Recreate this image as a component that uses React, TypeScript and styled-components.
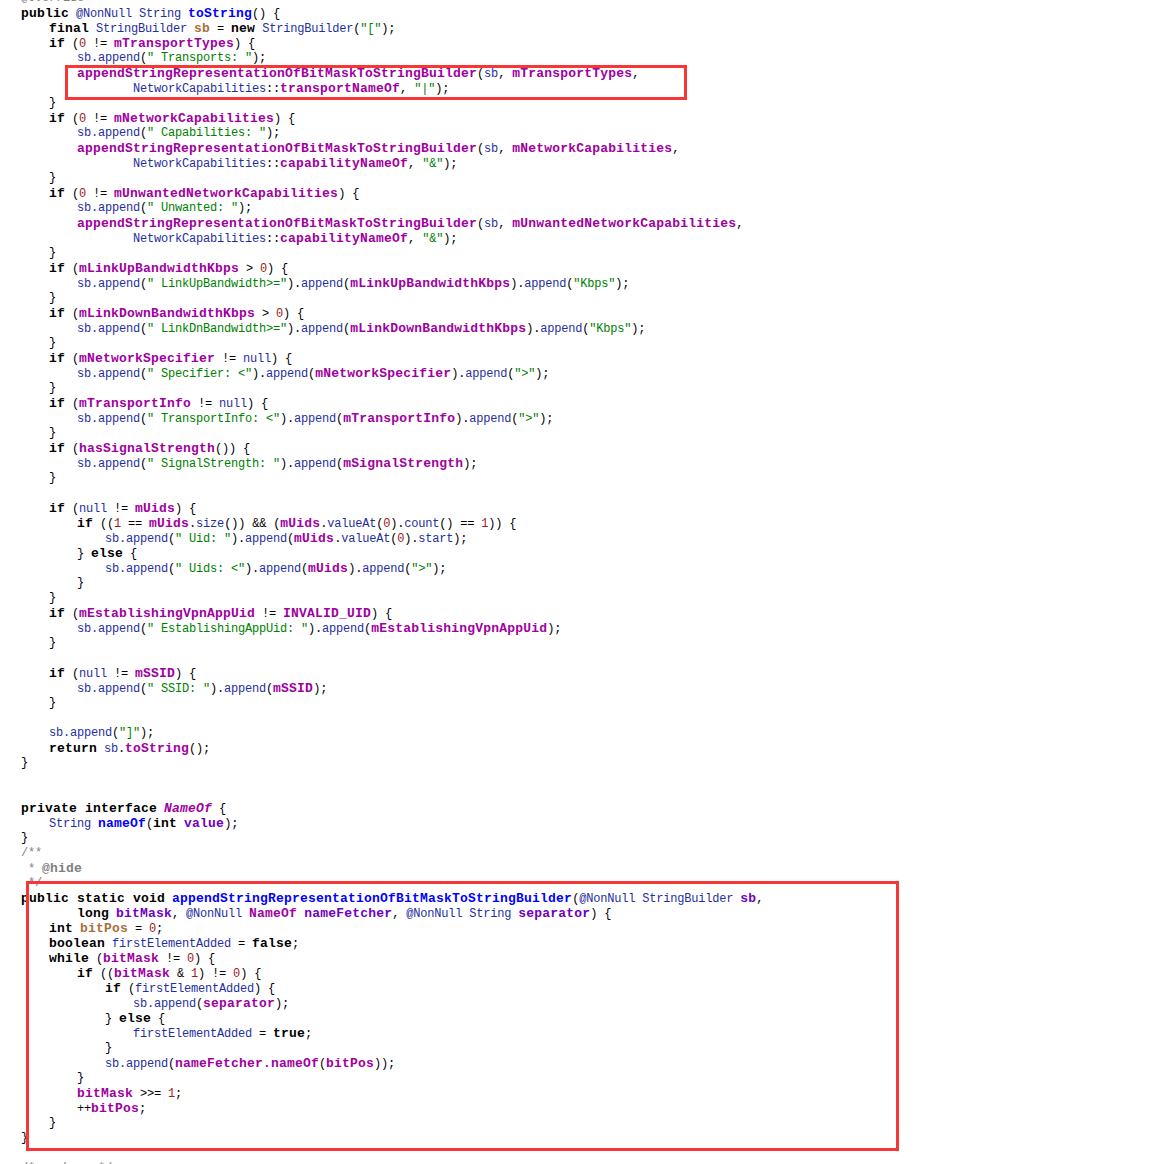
import { FunctionComponent } from 'react';
import styled, { createGlobalStyle } from 'styled-components';

// markup: k{keyword} f{field} m{method} v{identifier} s{string} n{number}
// p{parameter} l{local} c{comment} d{doc tag} i{interface}
const SOURCE = `c{@Override}
k{public} v{@NonNull String} m{toString}() {
    k{final} v{StringBuilder} l{sb} = k{new} v{StringBuilder}(s{"["});
    k{if} (n{0} != f{mTransportTypes}) {
        v{sb.append}(s{" Transports: "});
        f{appendStringRepresentationOfBitMaskToStringBuilder}(v{sb}, f{mTransportTypes},
                v{NetworkCapabilities}::f{transportNameOf}, s{"|"});
    }
    k{if} (n{0} != f{mNetworkCapabilities}) {
        v{sb.append}(s{" Capabilities: "});
        f{appendStringRepresentationOfBitMaskToStringBuilder}(v{sb}, f{mNetworkCapabilities},
                v{NetworkCapabilities}::f{capabilityNameOf}, s{"&"});
    }
    k{if} (n{0} != f{mUnwantedNetworkCapabilities}) {
        v{sb.append}(s{" Unwanted: "});
        f{appendStringRepresentationOfBitMaskToStringBuilder}(v{sb}, f{mUnwantedNetworkCapabilities},
                v{NetworkCapabilities}::f{capabilityNameOf}, s{"&"});
    }
    k{if} (f{mLinkUpBandwidthKbps} > n{0}) {
        v{sb.append}(s{" LinkUpBandwidth>="}).v{append}(f{mLinkUpBandwidthKbps}).v{append}(s{"Kbps"});
    }
    k{if} (f{mLinkDownBandwidthKbps} > n{0}) {
        v{sb.append}(s{" LinkDnBandwidth>="}).v{append}(f{mLinkDownBandwidthKbps}).v{append}(s{"Kbps"});
    }
    k{if} (f{mNetworkSpecifier} != v{null}) {
        v{sb.append}(s{" Specifier: <"}).v{append}(f{mNetworkSpecifier}).v{append}(s{">"});
    }
    k{if} (f{mTransportInfo} != v{null}) {
        v{sb.append}(s{" TransportInfo: <"}).v{append}(f{mTransportInfo}).v{append}(s{">"});
    }
    k{if} (f{hasSignalStrength}()) {
        v{sb.append}(s{" SignalStrength: "}).v{append}(f{mSignalStrength});
    }

    k{if} (v{null} != f{mUids}) {
        k{if} ((n{1} == f{mUids}.v{size}()) && (f{mUids}.v{valueAt}(n{0}).v{count}() == n{1})) {
            v{sb.append}(s{" Uid: "}).v{append}(f{mUids}.v{valueAt}(n{0}).v{start});
        } k{else} {
            v{sb.append}(s{" Uids: <"}).v{append}(f{mUids}).v{append}(s{">"});
        }
    }
    k{if} (f{mEstablishingVpnAppUid} != f{INVALID_UID}) {
        v{sb.append}(s{" EstablishingAppUid: "}).v{append}(f{mEstablishingVpnAppUid});
    }

    k{if} (v{null} != f{mSSID}) {
        v{sb.append}(s{" SSID: "}).v{append}(f{mSSID});
    }

    v{sb.append}(s{"]"});
    k{return} v{sb}.f{toString}();
}


k{private interface} i{NameOf} {
    v{String} m{nameOf}(k{int} p{value});
}
c{/**}
c{ * }d{@hide}
c{ */}
k{public static void} m{appendStringRepresentationOfBitMaskToStringBuilder}(v{@NonNull StringBuilder} p{sb},
        k{long} p{bitMask}, v{@NonNull} f{NameOf} p{nameFetcher}, v{@NonNull String} p{separator}) {
    k{int} l{bitPos} = n{0};
    k{boolean} v{firstElementAdded} = k{false};
    k{while} (f{bitMask} != n{0}) {
        k{if} ((f{bitMask} & n{1}) != n{0}) {
            k{if} (v{firstElementAdded}) {
                v{sb.append}(f{separator});
            } k{else} {
                v{firstElementAdded} = k{true};
            }
            v{sb.append}(f{nameFetcher.nameOf}(f{bitPos}));
        }
        f{bitMask} >>= n{1};
        ++f{bitPos};
    }
}

c{/* package */}`;

type TokenKind = 'k' | 'f' | 'm' | 'v' | 's' | 'n' | 'p' | 'l' | 'c' | 'd' | 'i' | 'plain';

const TOKEN_COLORS: Record<TokenKind, string> = {
  k: '#000000',
  f: '#a000a0',
  m: '#0000ff',
  v: '#1f2f9f',
  s: '#008000',
  n: '#a02020',
  p: '#7000c0',
  l: '#a8703c',
  c: '#808080',
  d: '#7f7f7f',
  i: '#a000a0',
  plain: '#000000',
};

const BOLD_KINDS: TokenKind[] = ['k', 'f', 'm', 'p', 'l', 'd', 'i'];

const GlobalStyle = createGlobalStyle`
  html, body {
    margin: 0;
    padding: 0;
    background: #ffffff;
  }
`;

const Page = styled.main`
  position: relative;
  width: 1176px;
  height: 1164px;
  overflow: hidden;
  background: #ffffff;
`;

const Code = styled.div`
  margin-top: -9px;
  padding-left: 21px;
  font-family: 'Liberation Mono', monospace;
  font-size: 12px;
  letter-spacing: -0.2px;
  color: #000000;
`;

const Line = styled.div`
  height: 15px;
  line-height: 15px;
  white-space: pre;
`;

const Token = styled.span<{ $kind: TokenKind }>`
  color: ${({ $kind }) => TOKEN_COLORS[$kind]};
  ${({ $kind }) =>
    BOLD_KINDS.includes($kind) &&
    `
    font-weight: bold;
    font-size: 13px;
    letter-spacing: 0.2px;
  `}
  ${({ $kind }) => $kind === 'i' && 'font-style: italic;'}
`;

const Highlight = styled.div<{ $left: number; $top: number; $width: number; $height: number }>`
  position: absolute;
  left: ${({ $left }) => $left}px;
  top: ${({ $top }) => $top}px;
  width: ${({ $width }) => $width}px;
  height: ${({ $height }) => $height}px;
  box-sizing: border-box;
  border: 3px solid #f93636;
`;

const parseLine = (line: string) => {
  const tokens: { kind: TokenKind; text: string }[] = [];
  const pattern = /\b([a-z])\{([^}]*)\}/g;
  let last = 0;
  let match = pattern.exec(line);

  while (match) {
    if (match.index > last) {
      tokens.push({ kind: 'plain', text: line.slice(last, match.index) });
    }
    tokens.push({ kind: match[1] as TokenKind, text: match[2] });
    last = match.index + match[0].length;
    match = pattern.exec(line);
  }

  if (last < line.length) {
    tokens.push({ kind: 'plain', text: line.slice(last) });
  }

  return tokens;
};

const App: FunctionComponent = () => (
  <Page>
    <GlobalStyle />
    <Code>
      {SOURCE.split('\n').map((line, lineIndex) => (
        <Line key={lineIndex}>
          {parseLine(line).map((token, tokenIndex) => (
            <Token key={tokenIndex} $kind={token.kind}>
              {token.text}
            </Token>
          ))}
        </Line>
      ))}
    </Code>
    <Highlight $left={65} $top={65} $width={622} $height={35} />
    <Highlight $left={26} $top={881} $width={873} $height={270} />
  </Page>
);

export default App;
